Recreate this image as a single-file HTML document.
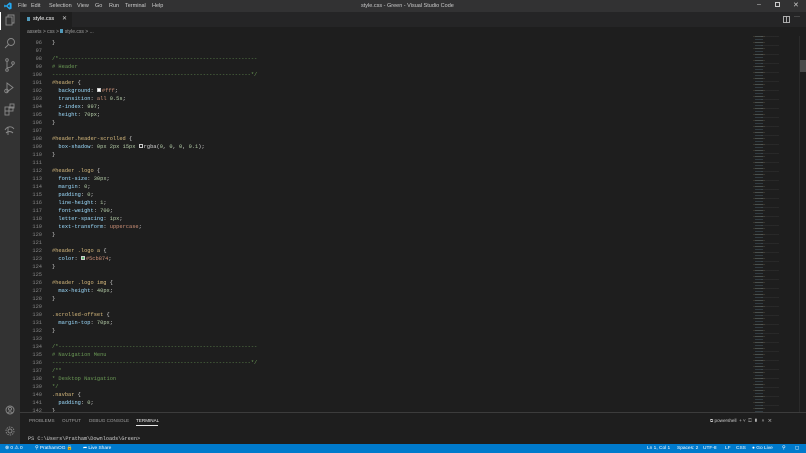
<!DOCTYPE html>
<html><head><meta charset="utf-8"><style>
*{margin:0;padding:0;box-sizing:border-box}
body{width:806px;height:453px;background:#1e1e1e;overflow:hidden;position:relative;font-family:"Liberation Sans",sans-serif;}
.abs{position:absolute}
#title{left:0;top:0;width:806px;height:12px;background:#323233;color:#ccc;font-size:5.5px;}
#title span{position:absolute;top:3px}
#act{left:0;top:12px;width:20px;height:432px;background:#333333}
#tabs{left:20px;top:12px;width:786px;height:15px;background:#252526}
#tab{left:20px;top:12px;width:52px;height:15px;background:#1e1e1e;color:#fff;font-size:5.5px}
#crumb{left:20px;top:27px;height:9px;color:#a0a0a0;font-size:5px}
.code{font-family:"Liberation Mono",monospace;font-size:5.35px;white-space:pre;line-height:8px}
#ln{left:20px;top:39px;width:22px;text-align:right;color:#858585}
#src{left:52px;top:39px;color:#d4d4d4}
.s{color:#d7ba7d}.p{color:#9cdcfe}.n{color:#b5cea8}.k{color:#ce9178}.c{color:#6a9955}
.sw{display:inline-block;width:4px;height:4px;border:0.6px solid #ccc;vertical-align:-0.3px;margin-right:1px}
#panel{left:20px;top:412px;width:786px;height:32px;background:#1e1e1e;border-top:1px solid #3c3c3c}
.pt{position:absolute;top:5px;font-size:4.6px;color:#9a9a9a}
#status{left:0;top:444px;width:806px;height:9px;background:#007acc;color:#fff;font-size:4.8px}
#status span{position:absolute;top:2px}
#mini{left:753px;top:36px;width:40px;height:376px;
background:
repeating-linear-gradient(to bottom,rgba(156,220,254,.16) 0 1px,transparent 1px 3px) 2px 0/8px 100% no-repeat,
repeating-linear-gradient(to bottom,rgba(215,186,125,.14) 0 1px,transparent 1px 6px) 0 0/12px 100% no-repeat,
repeating-linear-gradient(to bottom,rgba(180,180,180,.07) 0 1px,transparent 1px 9px) 8px 0/18px 100% no-repeat;}
</style></head><body>
<div id="title" class="abs">
<svg class="abs" style="left:4px;top:2px" width="8" height="8" viewBox="0 0 10 10"><path d="M7 0.5L9.5 1.7V8.3L7 9.5L2.5 5.5L1 6.7L0.3 6.2V3.8L1 3.3L2.5 4.5ZM7 3L4.5 5L7 7Z" fill="#23a9f2"/></svg>
<span style="left:18px">File</span><span style="left:31px">Edit</span><span style="left:49px">Selection</span><span style="left:77px">View</span><span style="left:95px">Go</span><span style="left:109px">Run</span><span style="left:125px">Terminal</span><span style="left:152px">Help</span>
<span style="left:361px">style.css - Green - Visual Studio Code</span>
<span style="left:757px;top:1px;font-size:7px">–</span>
<span style="left:775px;top:2px;width:5px;height:5px;border:0.8px solid #ccc"></span>
<span style="left:793px;top:1px;font-size:7px">✕</span>
</div>
<div id="act" class="abs">
<svg width="20" height="432" viewBox="0 0 20 432" fill="none" stroke="#8a8a8a" stroke-width="0.9">
<rect x="6" y="5" width="6" height="8"/><path d="M8 5V3h6v8h-2"/>
<circle cx="11" cy="30" r="3.5"/><path d="M8.5 32.5L5 36"/>
<circle cx="7" cy="48" r="1.3"/><circle cx="7" cy="58" r="1.3"/><circle cx="13" cy="51" r="1.3"/><path d="M7 49.3V56.7M13 52.3Q13 55 7 56"/>
<path d="M7 71v9l6-4.5z"/><circle cx="6.5" cy="79" r="1.8"/>
<rect x="5" y="95" width="4" height="4"/><rect x="9" y="95" width="4" height="4"/><rect x="5" y="99" width="4" height="4"/><rect x="10" y="92" width="4" height="4"/>
<path d="M5 118c2-4 7-4 9-1M6 121c2-2 5-2 7 0M8 115v8"/>
<circle cx="10" cy="398" r="4"/><circle cx="10" cy="396.8" r="1.5"/><path d="M7.3 401q2.7-2.5 5.4 0"/>
<circle cx="10" cy="419" r="2"/><circle cx="10" cy="419" r="4" stroke-dasharray="1.5 1"/>
</svg>
<div class="abs" style="left:0;top:0;width:1px;height:18px;background:#fff"></div>
</div>
<div id="tabs" class="abs">
<svg class="abs" style="left:763px;top:4px" width="7" height="7"><rect x="0.5" y="0.5" width="6" height="6" fill="none" stroke="#ccc" stroke-width="0.8"/><path d="M3.5 0.5v6" stroke="#ccc" stroke-width="0.8"/></svg>
<span class="abs" style="left:774px;top:2px;color:#ccc;font-size:6px">···</span>
</div>
<div id="tab" class="abs"><span class="abs" style="left:7px;top:5px;width:3px;height:4px;background:#519aba"></span><span class="abs" style="left:13px;top:4px">style.css</span><span class="abs" style="left:42px;top:3px;font-size:6px;color:#ccc">✕</span></div>
<div id="crumb" class="abs"><span class="abs" style="left:7px;top:2px;white-space:nowrap">assets &gt; css &gt; <span style="display:inline-block;width:3px;height:4px;background:#519aba"></span> style.css &gt; ...</span></div>
<div id="ln" class="abs code">96
97
98
99
100
101
102
103
104
105
106
107
108
109
110
111
112
113
114
115
116
117
118
119
120
121
122
123
124
125
126
127
128
129
130
131
132
133
134
135
136
137
138
139
140
141
142</div>
<div id="src" class="abs code">}

<span class="c">/*--------------------------------------------------------------</span>
<span class="c"># Header</span>
<span class="c">--------------------------------------------------------------*/</span>
<span class="s">#header</span> {
  <span class="p">background</span>: <span class="sw" style="background:#fff"></span><span class="k">#fff</span>;
  <span class="p">transition</span>: <span class="k">all</span> <span class="n">0.5s</span>;
  <span class="p">z-index</span>: <span class="n">997</span>;
  <span class="p">height</span>: <span class="n">70px</span>;
}

<span class="s">#header.header-scrolled</span> {
  <span class="p">box-shadow</span>: <span class="n">0px</span> <span class="n">2px</span> <span class="n">15px</span> <span class="sw" style="background:#1e1e1e"></span>rgba(<span class="n">0</span>, <span class="n">0</span>, <span class="n">0</span>, <span class="n">0.1</span>);
}

<span class="s">#header .logo</span> {
  <span class="p">font-size</span>: <span class="n">30px</span>;
  <span class="p">margin</span>: <span class="n">0</span>;
  <span class="p">padding</span>: <span class="n">0</span>;
  <span class="p">line-height</span>: <span class="n">1</span>;
  <span class="p">font-weight</span>: <span class="n">700</span>;
  <span class="p">letter-spacing</span>: <span class="n">1px</span>;
  <span class="p">text-transform</span>: <span class="k">uppercase</span>;
}

<span class="s">#header .logo a</span> {
  <span class="p">color</span>: <span class="sw" style="background:#5cb874"></span><span class="k">#5cb874</span>;
}

<span class="s">#header .logo img</span> {
  <span class="p">max-height</span>: <span class="n">40px</span>;
}

<span class="s">.scrolled-offset</span> {
  <span class="p">margin-top</span>: <span class="n">70px</span>;
}

<span class="c">/*--------------------------------------------------------------</span>
<span class="c"># Navigation Menu</span>
<span class="c">--------------------------------------------------------------*/</span>
<span class="c">/**</span>
<span class="c">* Desktop Navigation</span>
<span class="c">*/</span>
<span class="s">.navbar</span> {
  <span class="p">padding</span>: <span class="n">0</span>;
}</div>
<div id="mini" class="abs"></div>
<div class="abs" style="left:799px;top:36px;width:7px;height:376px;background:#1e1e1e;border-left:1px solid #2a2a2a"></div>
<div class="abs" style="left:800px;top:60px;width:6px;height:12px;background:#4a4a4a"></div>
<div id="panel" class="abs">
<span class="pt" style="left:9px">PROBLEMS</span><span class="pt" style="left:42px">OUTPUT</span><span class="pt" style="left:69px">DEBUG CONSOLE</span><span class="pt" style="left:116px;color:#e7e7e7">TERMINAL</span>
<div class="abs" style="left:116px;top:12px;width:22px;height:1px;background:#e7e7e7"></div>
<span class="pt" style="left:690px;color:#ccc">⧉ powershell &nbsp;+ ˅ &nbsp;◫ &nbsp;▮ &nbsp; ˄ &nbsp; ✕</span>
<span class="abs code" style="left:8px;top:22px;color:#ccc;font-size:5.2px">PS C:\Users\Pratham\Downloads\Green&gt;</span>
</div>
<div id="status" class="abs">
<span style="left:5px">⊗ 0 ⚠ 0</span><span style="left:35px">⚲ PrathamOG 🔒</span><span style="left:83px">➦ Live Share</span>
<span style="left:647px">Ln 1, Col 1</span><span style="left:677px">Spaces: 2</span><span style="left:703px">UTF-8</span><span style="left:725px">LF</span><span style="left:736px">CSS</span><span style="left:752px">● Go Live</span><span style="left:782px">⚲</span><span style="left:795px">◻</span>
</div>
</body></html>
